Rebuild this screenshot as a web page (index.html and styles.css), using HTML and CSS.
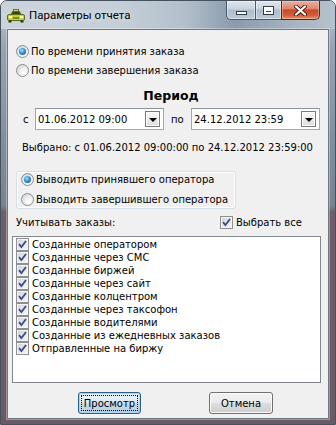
FILE: index.html
```html
<!DOCTYPE html>
<html lang="ru">
<head>
<meta charset="utf-8">
<title>Параметры отчета</title>
<link rel="stylesheet" href="styles.css">
</head>
<body>
<div class="window">
  <div class="titlebar">
    <svg class="app-icon" width="18" height="14" viewBox="0 0 18 14">
      <rect x="6.5" y="0.5" width="5" height="2" fill="#ece36a" stroke="#6e6a1e" stroke-width="1"/>
      <path d="M4 6 L5.5 2.5 H12.5 L14 6 Z" fill="#39452a" stroke="#56641e" stroke-width="1"/>
      <rect x="0.5" y="5.5" width="17" height="6" rx="1.5" fill="#c4d03c" stroke="#5e6c17" stroke-width="1"/>
      <rect x="2" y="7" width="3" height="2" fill="#fdfbd2"/>
      <rect x="13" y="7" width="3" height="2" fill="#fdfbd2"/>
      <rect x="6" y="8" width="6" height="2" fill="#7c8a24"/>
      <rect x="1.5" y="11.5" width="3" height="2" fill="#2c3016"/>
      <rect x="13.5" y="11.5" width="3" height="2" fill="#2c3016"/>
    </svg>
    <span class="title">Параметры отчета</span>
    <div class="caption">
      <div class="cap-btn cap-min"><span class="min-glyph"></span></div>
      <div class="cap-btn cap-max"><span class="max-glyph"></span></div>
      <div class="cap-btn cap-close">
        <svg width="13" height="11" viewBox="0 0 13 11">
          <path d="M2 1.5 L11 9.5 M11 1.5 L2 9.5" stroke="#4a1e16" stroke-width="4" stroke-linecap="round"/>
          <path d="M2 1.5 L11 9.5 M11 1.5 L2 9.5" stroke="#ffffff" stroke-width="2.2" stroke-linecap="round"/>
        </svg>
      </div>
    </div>
  </div>

  <div class="client">
    <div class="radios">
      <div class="radio-row"><span class="radio checked"></span><span>По времени принятия заказа</span></div>
      <div class="radio-row"><span class="radio"></span><span>По времени завершения заказа</span></div>
    </div>

    <div class="period-title">Период</div>

    <div class="period-row">
      <span class="lbl-from">с</span>
      <div class="combo"><span class="combo-text">01.06.2012 09:00</span><span class="combo-btn"><span class="tri"></span></span></div>
      <span class="lbl-to">по</span>
      <div class="combo"><span class="combo-text">24.12.2012 23:59</span><span class="combo-btn"><span class="tri"></span></span></div>
    </div>

    <div class="selected">Выбрано: с 01.06.2012 09:00:00 по 24.12.2012 23:59:00</div>

    <div class="group">
      <div class="radio-row"><span class="radio checked"></span><span>Выводить принявшего оператора</span></div>
      <div class="radio-row"><span class="radio"></span><span>Выводить завершившего оператора</span></div>
    </div>

    <div class="orders-head">
      <span class="orders-label">Учитывать заказы:</span>
      <div class="check-row"><span class="cb"><svg width="11" height="11" viewBox="0 0 11 11"><path d="M2 5.2 L4.4 8 L9 2" fill="none" stroke="#3a4b8c" stroke-width="1.8"/></svg></span><span>Выбрать все</span></div>
    </div>

    <div class="listbox">
      <div class="check-row"><span class="cb"><svg width="11" height="11" viewBox="0 0 11 11"><path d="M2 5.2 L4.4 8 L9 2" fill="none" stroke="#3a4b8c" stroke-width="1.8"/></svg></span><span>Созданные оператором</span></div>
      <div class="check-row"><span class="cb"><svg width="11" height="11" viewBox="0 0 11 11"><path d="M2 5.2 L4.4 8 L9 2" fill="none" stroke="#3a4b8c" stroke-width="1.8"/></svg></span><span>Созданные через СМС</span></div>
      <div class="check-row"><span class="cb"><svg width="11" height="11" viewBox="0 0 11 11"><path d="M2 5.2 L4.4 8 L9 2" fill="none" stroke="#3a4b8c" stroke-width="1.8"/></svg></span><span>Созданные биржей</span></div>
      <div class="check-row"><span class="cb"><svg width="11" height="11" viewBox="0 0 11 11"><path d="M2 5.2 L4.4 8 L9 2" fill="none" stroke="#3a4b8c" stroke-width="1.8"/></svg></span><span>Созданные через сайт</span></div>
      <div class="check-row"><span class="cb"><svg width="11" height="11" viewBox="0 0 11 11"><path d="M2 5.2 L4.4 8 L9 2" fill="none" stroke="#3a4b8c" stroke-width="1.8"/></svg></span><span>Созданные колцентром</span></div>
      <div class="check-row"><span class="cb"><svg width="11" height="11" viewBox="0 0 11 11"><path d="M2 5.2 L4.4 8 L9 2" fill="none" stroke="#3a4b8c" stroke-width="1.8"/></svg></span><span>Созданные через таксофон</span></div>
      <div class="check-row"><span class="cb"><svg width="11" height="11" viewBox="0 0 11 11"><path d="M2 5.2 L4.4 8 L9 2" fill="none" stroke="#3a4b8c" stroke-width="1.8"/></svg></span><span>Созданные водителями</span></div>
      <div class="check-row"><span class="cb"><svg width="11" height="11" viewBox="0 0 11 11"><path d="M2 5.2 L4.4 8 L9 2" fill="none" stroke="#3a4b8c" stroke-width="1.8"/></svg></span><span>Созданные из ежедневных заказов</span></div>
      <div class="check-row"><span class="cb"><svg width="11" height="11" viewBox="0 0 11 11"><path d="M2 5.2 L4.4 8 L9 2" fill="none" stroke="#3a4b8c" stroke-width="1.8"/></svg></span><span>Отправленные на биржу</span></div>
    </div>

    <div class="buttons">
      <button class="btn btn-default"><span class="focus">Просмотр</span></button>
      <button class="btn btn-cancel">Отмена</button>
    </div>
  </div>
</div>
</body>
</html>
```
FILE: styles.css
```css
html, body {
  margin: 0;
  padding: 0;
  background: #ffffff;
}

body {
  font-family: "DejaVu Sans", "Liberation Sans", sans-serif;
  font-size: 10px;
  color: #000;
}

.window {
  box-sizing: border-box;
  width: 336px;
  height: 425px;
  border: 1px solid #46515d;
  border-radius: 7px 7px 0 0;
  overflow: hidden;
  display: flex;
  flex-direction: column;
  background: linear-gradient(180deg, #b9c5d0 0px, #95a3b1 50px, #7e8d9c 150px, #76848f 204px, #6d5e69 212px, #6a5a65 100%);
}

/* ---------- title bar ---------- */
.titlebar {
  height: 28px;
  flex: none;
  display: flex;
  align-items: center;
  padding-left: 6px;
  background: linear-gradient(90deg, #cbd4dd 0%, #c5cfd8 35%, #b3c0cc 55%, #94a4b4 66%, #8b9bab 70%, #a3b1be 85%, #b6c2cd 100%);
}

.app-icon {
  flex: none;
  margin-top: 1px;
}

.title {
  margin-left: 4px;
  font-family: Roboto, "Noto Sans", sans-serif;
  font-size: 11.5px;
  color: #000;
  text-shadow: 0 0 6px rgba(255, 255, 255, 0.8);
}

.caption {
  align-self: flex-start;
  margin-left: auto;
  margin-right: 15px;
  display: flex;
  height: 19px;
}

.cap-btn {
  box-sizing: border-box;
  height: 19px;
  border: 1px solid #4c596a;
  border-top: none;
  display: flex;
  align-items: center;
  justify-content: center;
}

.cap-min {
  width: 29px;
  border-radius: 0 0 0 5px;
  border-right: none;
  align-items: flex-end;
  padding-bottom: 4px;
  background: linear-gradient(180deg, #dfe6ee 0%, #c9d3de 45%, #aebdcc 50%, #bccad8 100%);
  box-shadow: inset 0 0 0 1px rgba(255, 255, 255, 0.45);
}

.cap-max {
  width: 26px;
  border-right: none;
  background: linear-gradient(180deg, #dfe6ee 0%, #c9d3de 45%, #aebdcc 50%, #bccad8 100%);
  box-shadow: inset 0 0 0 1px rgba(255, 255, 255, 0.45);
}

.cap-close {
  width: 39px;
  border-radius: 0 0 5px 0;
  border-color: #56261c;
  background: linear-gradient(180deg, #eab0a2 0%, #df8670 42%, #c9492c 50%, #cf5a38 78%, #e39670 100%);
  box-shadow: inset 0 0 0 1px rgba(255, 220, 200, 0.4);
}

.min-glyph {
  display: block;
  box-sizing: border-box;
  width: 11px;
  height: 4px;
  background: #fff;
  border: 1px solid #2f3b4a;
}

.max-glyph {
  display: block;
  box-sizing: border-box;
  width: 11px;
  height: 9px;
  border: 1px solid #2f3b4a;
  box-shadow: inset 0 0 0 2px #fff, inset 0 2px 0 2px #fff, inset 0 0 0 3px #2f3b4a;
  background: #b7c4d1;
}

/* ---------- client ---------- */
.client {
  flex: 1;
  margin: 0 6px 5px;
  border: 1px solid #6e7985;
  background: #f0f0f0;
  display: flex;
  flex-direction: column;
  box-shadow: 0 0 0 1px rgba(255, 255, 255, 0.35);
}

.radios {
  margin: 13px 0 0 8px;
  display: flex;
  flex-direction: column;
  gap: 3px;
}

.radio-row {
  display: flex;
  align-items: center;
  height: 16px;
  gap: 2px;
  white-space: nowrap;
}

.radio {
  position: relative;
  flex: none;
  box-sizing: border-box;
  width: 13px;
  height: 13px;
  border-radius: 50%;
  border: 1px solid #8c8f92;
  background: radial-gradient(circle at 65% 70%, #ffffff 0%, #f2f2f2 35%, #d2d4d6 80%, #c4c6c8 100%);
}

.radio.checked::after {
  content: "";
  position: absolute;
  left: 2px;
  top: 2px;
  width: 7px;
  height: 7px;
  border-radius: 50%;
  background: radial-gradient(circle at 40% 35%, #a6e1ff 0%, #3f9be0 40%, #1b5d9e 80%, #123f74 100%);
}

.period-title {
  margin-top: 9px;
  height: 18px;
  line-height: 18px;
  text-align: center;
  padding-left: 6px;
  font-weight: bold;
  font-size: 12.5px;
}

.period-row {
  margin-top: 3px;
  height: 22px;
  display: flex;
  align-items: center;
  padding-left: 15px;
}

.lbl-from {
  width: 12px;
  flex: none;
}

.lbl-to {
  width: 20px;
  margin-left: 7px;
  flex: none;
}

.combo {
  box-sizing: border-box;
  width: 129px;
  height: 22px;
  flex: none;
  border: 1px solid #a3a8b0;
  border-top-color: #8d939b;
  background: #fff;
  display: flex;
  align-items: center;
  padding: 0 3px 0 2px;
}

.combo-text {
  flex: 1;
  white-space: nowrap;
}

.combo-btn {
  box-sizing: border-box;
  width: 15px;
  height: 16px;
  border: 1px solid #7a7a7a;
  background: linear-gradient(180deg, #fafafa 0%, #ececec 50%, #dcdcdc 100%);
  box-shadow: inset 0 0 0 1px #ffffff;
  display: flex;
  align-items: center;
  justify-content: center;
}

.tri {
  width: 0;
  height: 0;
  border-left: 4px solid transparent;
  border-right: 4px solid transparent;
  border-top: 4px solid #000;
  margin-top: 1px;
}

.selected {
  margin-top: 11px;
  height: 14px;
  line-height: 14px;
  padding-left: 14px;
  white-space: nowrap;
}

.group {
  margin: 16px 0 0 8px;
  box-sizing: border-box;
  width: 220px;
  height: 38px;
  border: 1px solid #d5dfe5;
  border-radius: 3px;
  padding-left: 4px;
  display: flex;
  flex-direction: column;
  gap: 6px;
  box-shadow: inset 0 0 0 1px #ffffff;
}

.group .radio-row {
  height: 14px;
}

.orders-head {
  margin-top: 5px;
  height: 16px;
  display: flex;
  align-items: center;
  padding-left: 8px;
}

.orders-label {
  width: 204px;
  flex: none;
}

.check-row {
  display: flex;
  align-items: center;
  gap: 3px;
  white-space: nowrap;
}

.cb {
  flex: none;
  box-sizing: border-box;
  width: 13px;
  height: 13px;
  border: 1px solid #8e8f91;
  background: linear-gradient(135deg, #cfd1d4 0%, #e7e8ea 55%, #f8f8f8 100%);
  box-shadow: inset 0 0 0 1px #f4f4f4;
  display: flex;
  align-items: center;
  justify-content: center;
}

.cb svg {
  display: block;
}

.listbox {
  margin: 6px 0 0 4px;
  box-sizing: border-box;
  width: 309px;
  height: 147px;
  border: 1px solid #828790;
  background: #fff;
  padding: 1px 0 0 3px;
}

.listbox .check-row {
  height: 13px;
}

.buttons {
  margin-top: 9px;
  display: flex;
  padding-left: 70px;
  gap: 68px;
}

.btn {
  box-sizing: border-box;
  width: 63px;
  height: 22px;
  padding: 0;
  border: 1px solid #707070;
  border-radius: 3px;
  background: linear-gradient(180deg, #f2f2f2 0%, #ebebeb 48%, #dddddd 52%, #cfcfcf 100%);
  box-shadow: inset 0 0 0 1px #fbfbfb;
  font-family: "DejaVu Sans", "Liberation Sans", sans-serif;
  font-size: 10px;
  color: #000;
}

.btn-cancel {
  width: 64px;
}

.btn-default {
  border-color: #2c628b;
  padding: 2px;
  background: linear-gradient(180deg, #e9f3f9 0%, #dbeaf4 48%, #c6dbea 52%, #b7d0e2 100%);
  box-shadow: inset 0 0 0 1px #a8d2ee;
}

.focus {
  box-sizing: border-box;
  display: flex;
  align-items: center;
  justify-content: center;
  width: 100%;
  height: 100%;
  border: 1px dotted #000;
}
```
